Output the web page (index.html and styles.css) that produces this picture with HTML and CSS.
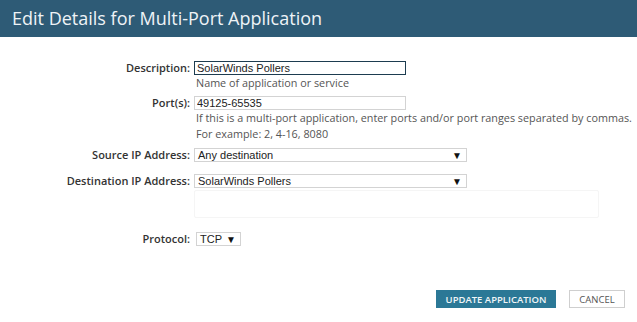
FILE: index.html
```html
<!DOCTYPE html>
<html>
<head>
<meta charset="utf-8">
<link rel="stylesheet" href="styles.css">
</head>
<body>
<header class="title-bar">Edit Details for Multi-Port Application</header>
<main class="form">
  <div class="row row-desc">
    <label class="label">Description:</label>
    <div class="field">
      <input class="text-input focused" value="SolarWinds Pollers">
      <div class="help">Name of application or service</div>
    </div>
  </div>
  <div class="row row-port">
    <label class="label">Port(s):</label>
    <div class="field">
      <input class="text-input" value="49125-65535">
      <div class="help">If this is a multi-port application, enter ports and/or port ranges separated by commas.</div>
      <div class="help">For example: 2, 4-16, 8080</div>
    </div>
  </div>
  <div class="row row-src">
    <label class="label">Source IP Address:</label>
    <div class="field">
      <div class="select wide"><span>Any destination</span><span class="arrow">▼</span></div>
    </div>
  </div>
  <div class="row row-dst">
    <label class="label">Destination IP Address:</label>
    <div class="field">
      <div class="select wide"><span>SolarWinds Pollers</span><span class="arrow">▼</span></div>
      <div class="faint-box"></div>
    </div>
  </div>
  <div class="row row-proto">
    <label class="label">Protocol:</label>
    <div class="field">
      <div class="select small"><span>TCP</span><span class="arrow">▼</span></div>
    </div>
  </div>
</main>
<footer class="actions">
  <button class="btn primary">UPDATE APPLICATION</button>
  <button class="btn secondary">CANCEL</button>
</footer>
</body>
</html>
```
FILE: styles.css
```css
html, body {
  margin: 0;
  padding: 0;
  background: #ffffff;
  width: 637px;
  height: 322px;
  overflow: hidden;
  font-family: "Open Sans", "DejaVu Sans", sans-serif;
}
.title-bar {
  height: 37px;
  box-sizing: border-box;
  background: #2e5b76;
  color: #eef3f6;
  font-size: 18px;
  line-height: 36px;
  padding-left: 12px;
}
.form {
  padding-top: 24px;
}
.row {
  display: grid;
  grid-template-columns: 190px 1fr;
  column-gap: 4px;
  align-items: start;
}
.label {
  text-align: right;
  font-weight: 600;
  font-size: 11px;
  color: #333;
  line-height: 14px;
  white-space: nowrap;
}
.field {
  display: flex;
  flex-direction: column;
  align-items: flex-start;
}
.text-input {
  box-sizing: border-box;
  width: 212px;
  height: 14px;
  margin: 0;
  padding: 0 2px;
  border: 1px solid #d3d3d3;
  font-family: "Liberation Sans", Arial, sans-serif;
  font-size: 11px;
  color: #222;
  outline: none;
}
.text-input.focused {
  border-color: #1d3c50;
}
.help {
  font-size: 10.8px;
  line-height: 16px;
  color: #555;
  padding-left: 2px;
  white-space: nowrap;
}
.row-port { margin-top: 5px; }
.row-src { margin-top: 6px; }
.row-dst { margin-top: 12px; }
.row-proto { margin-top: 14px; }
.select {
  box-sizing: border-box;
  height: 14px;
  border: 1px solid #d3d3d3;
  display: flex;
  justify-content: space-between;
  align-items: center;
  padding: 0 4px 0 3px;
  font-family: "Liberation Sans", Arial, sans-serif;
  font-size: 11px;
  color: #222;
}
.select.wide { width: 273px; }
.select.small { width: 45px; margin-left: 2px; padding-right: 4px; }
.arrow {
  font-size: 10px;
  color: #111;
}
.faint-box {
  box-sizing: border-box;
  width: 405px;
  height: 28px;
  margin-top: 2px;
  border: 1px solid #f5f5f5;
  border-radius: 2px;
}
.actions {
  display: flex;
  justify-content: flex-end;
  gap: 13px;
  padding-right: 12px;
  margin-top: 44px;
}
.btn {
  height: 18px;
  box-sizing: border-box;
  font-family: "Open Sans", sans-serif;
  font-size: 9.5px;
  padding: 0 9px;
  margin: 0;
  border-radius: 0;
  cursor: pointer;
}
.btn.primary {
  background: #2b7896;
  color: #f1f6f8;
  border: none;
  font-weight: 600;
  width: 120px;
}
.btn.secondary {
  background: #fff;
  color: #555;
  border: 1px solid #cfcfcf;
  width: 56px;
}
```
